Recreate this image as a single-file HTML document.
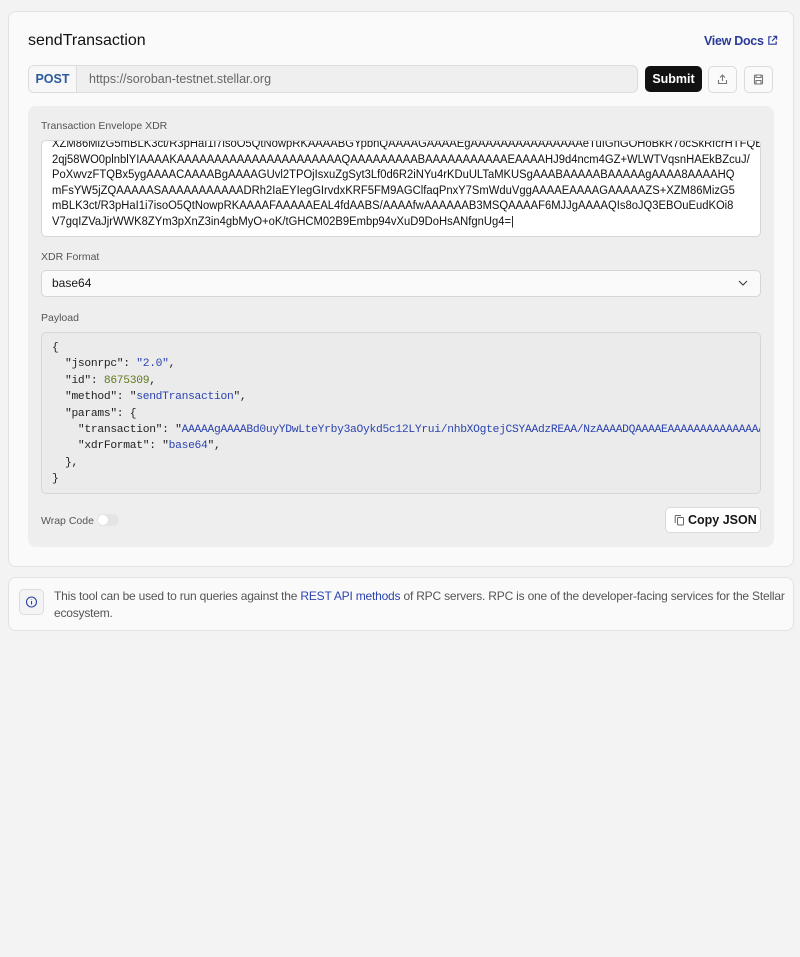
<!DOCTYPE html>
<html><head><meta charset="utf-8"><style>
*{box-sizing:border-box;margin:0;padding:0}
body{width:800px;height:957px;background:#f3f3f3;font-family:"Liberation Sans",sans-serif;color:#171717;position:relative;overflow:hidden}
.card{position:absolute;left:8px;top:11px;width:786px;height:556px;background:#fafafa;border:1px solid #e2e2e2;border-radius:8px}
.title{position:absolute;left:28px;top:32px;font-size:16px;color:#111}
.docs{position:absolute;left:704px;top:34px;font-size:12.5px;font-weight:bold;color:#2b3a9a;letter-spacing:-0.3px}
.url{position:absolute;left:28px;top:65px;width:610px;height:28px;border:1px solid #dcdcdc;border-radius:6px;background:#efefef;overflow:hidden}
.url .m{position:absolute;left:0;top:0;width:48px;height:26px;background:#f7f7f7;border-right:1px solid #dcdcdc;color:#2a5a9a;font-weight:bold;font-size:12.5px;line-height:26px;text-align:center}
.url .u{position:absolute;left:60px;top:0;line-height:26px;font-size:12.5px;color:#666}
.submit{position:absolute;left:645px;top:66px;width:57px;height:26px;background:#111;border-radius:5px;color:#fff;font-weight:bold;font-size:12.5px;line-height:26px;text-align:center}
.ib{position:absolute;top:66px;width:29px;height:27px;border:1px solid #dcdcdc;border-radius:5px;background:#fafafa}
.panel{position:absolute;left:28px;top:106px;width:746px;height:441px;background:#eeeeee;border-radius:8px}
.lbl{position:absolute;left:41px;font-size:10.5px;color:#555}
.ta{position:absolute;left:41px;top:140px;width:720px;height:97px;background:#fff;border:1px solid #d6d6d6;border-radius:5px;overflow:hidden}
.ta .t{position:absolute;left:10px;top:-5px;font-size:12.3px;line-height:15.6px;color:#111;white-space:nowrap;transform:scaleX(0.913);transform-origin:0 0}
.sel{position:absolute;left:41px;top:270px;width:720px;height:27px;background:#fafafa;border:1px solid #d6d6d6;border-radius:5px;font-size:12px;line-height:25px;padding-left:10px}
.code{position:absolute;left:41px;top:332px;width:720px;height:162px;background:#ebebeb;border:1px solid #d6d6d6;border-radius:5px;overflow:hidden}
.code pre{position:absolute;left:10px;top:7px;font-family:"Liberation Mono",monospace;font-size:11.3px;line-height:16.4px;color:#222;letter-spacing:-0.3px}
.s{color:#2b43b0}.n{color:#5e7a1c}
.copy{position:absolute;left:665px;top:507px;width:96px;height:26px;background:#fff;border:1px solid #dadada;border-radius:5px;font-weight:bold;font-size:12.5px;line-height:24px;padding-left:22px}
.tog{position:absolute;left:97px;top:514px;width:22px;height:12px;border-radius:6px;background:#e4e4e4}
.tog:after{content:"";position:absolute;left:1px;top:1px;width:10px;height:10px;border-radius:50%;background:#fff}
.info{position:absolute;left:8px;top:577px;width:786px;height:54px;background:#fafafa;border:1px solid #e2e2e2;border-radius:8px}
.info .ic{position:absolute;left:10px;top:11px;width:25px;height:26px;border:1px solid #dcdcdc;border-radius:5px;background:#f4f4f4}
.info p{position:absolute;left:45px;top:10px;width:740px;font-size:12px;line-height:16.5px;color:#555;letter-spacing:-0.2px}
.info a{color:#2b43b0;text-decoration:none}
</style></head><body>
<div class="card"></div>
<div class="title">sendTransaction</div>
<div class="docs">View Docs <svg width="11" height="11" viewBox="0 0 12 12" style="vertical-align:-1px" fill="none" stroke="#2b3a9a" stroke-width="1.3"><path d="M5 2H2v8h8V7M7 1.5h3.5V5M10.5 1.5L5.5 6.5"/></svg></div>
<div class="url"><div class="m">POST</div><div class="u">https://soroban-testnet.stellar.org</div></div>
<div class="submit">Submit</div>
<div class="ib" style="left:708px"><svg width="27" height="25" viewBox="0 0 27 25" fill="none" stroke="#777" stroke-width="1.1"><path d="M9.5 13v3.5h8V13M13.5 14V8M11 10.5l2.5-2.5 2.5 2.5"/></svg></div>
<div class="ib" style="left:744px"><svg width="27" height="25" viewBox="0 0 27 25" fill="none" stroke="#777" stroke-width="1.1"><rect x="9.5" y="8" width="8" height="9" rx="1"/><path d="M11 8v2.5h5V8M11 17v-3.5h5V17"/></svg></div>
<div class="panel"></div>
<div class="lbl" style="top:120px">Transaction Envelope XDR</div>
<div class="ta"><div class="t">XZM86MizG5mBLK3ct/R3pHaI1i7isoO5QtNowpRKAAAABGYpbnQAAAAGAAAAEgAAAAAAAAAAAAAAAeTuIGnGOHoBkR7ocSkRfcrHTFQBgpX<br>2qj58WO0plnblYIAAAAKAAAAAAAAAAAAAAAAAAAAAAQAAAAAAAAABAAAAAAAAAAAEAAAAHJ9d4ncm4GZ+WLWTVqsnHAEkBZcuJ/<br>PoXwvzFTQBx5ygAAAACAAAABgAAAAGUvl2TPOjIsxuZgSyt3Lf0d6R2iNYu4rKDuULTaMKUSgAAABAAAAABAAAAAgAAAA8AAAAHQ<br>mFsYW5jZQAAAAASAAAAAAAAAAADRh2IaEYIegGIrvdxKRF5FM9AGClfaqPnxY7SmWduVggAAAAEAAAAGAAAAAZS+XZM86MizG5<br>mBLK3ct/R3pHaI1i7isoO5QtNowpRKAAAAFAAAAAEAL4fdAABS/AAAAfwAAAAAAB3MSQAAAAF6MJJgAAAAQIs8oJQ3EBOuEudKOi8<br>V7gqIZVaJjrWWK8ZYm3pXnZ3in4gbMyO+oK/tGHCM02B9Embp94vXuD9DoHsANfgnUg4=|</div></div>
<div class="lbl" style="top:251px">XDR Format</div>
<div class="sel">base64<svg style="position:absolute;right:12px;top:9px" width="10" height="7" viewBox="0 0 10 7" fill="none" stroke="#444" stroke-width="1.2"><path d="M1 1l4 4 4-4"/></svg></div>
<div class="lbl" style="top:312px">Payload</div>
<div class="code"><pre>{
  "jsonrpc": <span class="s">"2.0"</span>,
  "id": <span class="n">8675309</span>,
  "method": "<span class="s">sendTransaction</span>",
  "params": {
    "transaction": "<span class="s">AAAAAgAAAABd0uyYDwLteYrby3aOykd5c12LYrui/nhbXOgtejCSYAAdzREAA/NzAAAADQAAAAEAAAAAAAAAAAAAAAAAA</span>
    "xdrFormat": "<span class="s">base64</span>",
  },
}</pre></div>
<div class="lbl" style="top:515px">Wrap Code</div>
<div class="tog"></div>
<div class="copy"><svg style="position:absolute;left:8px;top:6px" width="11" height="12" viewBox="0 0 11 12" fill="none" stroke="#666" stroke-width="1"><rect x="3.5" y="3.5" width="6" height="7.5" rx="1"/><path d="M7 1.5H2a.8.8 0 0 0-.8.8V9"/></svg>Copy JSON</div>
<div class="info"><div class="ic"><svg width="23" height="24" viewBox="0 0 23 24" fill="none" stroke="#2b43b0" stroke-width="1.1"><circle cx="11.5" cy="12" r="5"/><path d="M11.5 11v3.5M11.5 9.3v.3"/></svg></div><p>This tool can be used to run queries against the <a>REST API methods</a> of RPC servers. RPC is one of the developer-facing services for the Stellar ecosystem.</p></div>
</body></html>
